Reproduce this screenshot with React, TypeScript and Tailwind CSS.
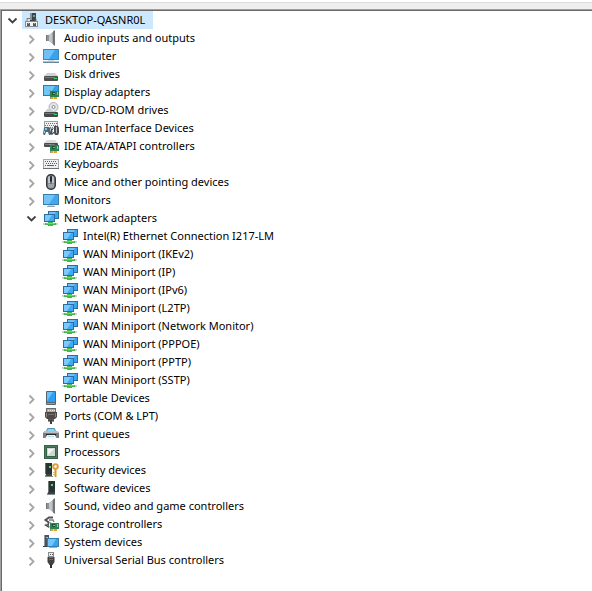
import { useState } from "react";
import type { ReactNode } from "react";
import clsx from "clsx";

interface DeviceNode {
  label: string;
  icon: ReactNode;
  expandable?: boolean;
  children?: DeviceNode[];
}

function Icon({ children }: { children: ReactNode }) {
  return (
    <svg viewBox="0 0 16 16" className="h-4 w-4 shrink-0" aria-hidden="true">
      {children}
    </svg>
  );
}

const computerRoot = (
  <Icon>
    <rect x="6" y="1" width="6" height="8" fill="#3c4248" />
    <rect x="6" y="1" width="2" height="7" fill="#8a9298" />
    <rect x="9" y="3" width="2" height="2" fill="#6fa08a" />
    <path d="M3 9V6.5h3M12 6.5v3" stroke="#777" fill="none" />
    <rect x="1.5" y="9.5" width="12" height="5" fill="#f4f4f4" stroke="#8b8b8b" />
    <rect x="3" y="11" width="3" height="3" fill="#5a5a5a" />
    <rect x="9" y="11" width="3" height="3" fill="#5a5a5a" />
    <rect x="4" y="11" width="1" height="1" fill="#d9a05a" />
    <rect x="10" y="11" width="1" height="1" fill="#d9a05a" />
  </Icon>
);

const speaker = (
  <Icon>
    <path d="M3 5h4v6H3z" fill="#8f9498" />
    <path d="M3 5h1v6H3z" fill="#6c7176" />
    <path d="M6 5l5-4v14l-5-4z" fill="#a4a8ac" />
    <path d="M6 5l3-2v10l-3-2z" fill="#c3c6c9" />
    <path d="M10 1.5L12 0v16l-2-1.5z" fill="#6f7479" />
  </Icon>
);

const computer = (
  <Icon>
    <rect x="0.5" y="1.5" width="15" height="10" fill="#37a3ef" stroke="#3a86b4" />
    <path d="M1 2h11L6 11H1z" fill="#6dc1f8" />
    <rect x="5" y="12" width="6" height="1" fill="#d0d8dc" />
    <rect x="0" y="13" width="16" height="1" fill="#b5c4cc" />
    <rect x="0" y="14" width="16" height="1" fill="#66889a" />
  </Icon>
);

const disk = (
  <Icon>
    <path d="M4 7h8l3 3H1z" fill="#cfd1d2" />
    <rect x="1" y="10" width="14" height="5" rx="1" fill="#4a4f50" />
    <rect x="2" y="11" width="10" height="1" fill="#777d7e" />
    <rect x="11" y="12" width="3" height="1" fill="#41d65d" />
  </Icon>
);

const card = (
  <g>
    <path d="M6 6.5h1.5V15" stroke="#8b9396" fill="none" />
    <rect x="7" y="7" width="9" height="6" fill="#2b8550" />
    <rect x="9" y="8" width="3" height="3" fill="#1b5539" />
    <rect x="10" y="9" width="2" height="1" fill="#6fb78a" />
    <rect x="14" y="8" width="1" height="3" fill="#8ed0a3" />
    <path d="M8 13h6v2H8z" fill="#e8a120" />
    <path d="M10.5 13v2" stroke="#f6d27c" />
  </g>
);

const display = (
  <Icon>
    <rect x="0.5" y="1.5" width="15" height="10" fill="#37a3e4" stroke="#2e7ba8" />
    <path d="M1 2h11L6 11H1z" fill="#6ec7f5" />
    {card}
  </Icon>
);

const disc = (
  <Icon>
    <circle cx="10.5" cy="5" r="4.5" fill="#e4e6e7" stroke="#a0a4a7" strokeWidth="0.8" />
    <circle cx="10.5" cy="5" r="1.5" fill="#fff" stroke="#898e91" />
    <path d="M4 7h3l2 2h3l3 2H1z" fill="#cbcdce" />
    <rect x="1" y="10" width="14" height="5" rx="1" fill="#454a4b" />
    <rect x="2" y="11" width="10" height="1" fill="#747a7b" />
    <rect x="11" y="12" width="3" height="1" fill="#41d65d" />
  </Icon>
);

const hid = (
  <Icon>
    <rect x="1.5" y="1.5" width="13" height="7" fill="#f0f1f2" stroke="#9ba0a3" />
    <path d="M3 3.5h11M3 7.5h11" stroke="#6e7478" strokeDasharray="1 1" />
    <path d="M2 5.5h12" stroke="#6e7478" strokeDasharray="1 1" />
    <path d="M0 14l1-6 1-1h4l1 1 1 6-1 1H6l-1-3H3l-1 3H1z" fill="#50697a" />
    <path d="M2 8h2v2H2zM1 11h1v2H1z" fill="#86c6ef" />
    <path d="M7 14l1-5h2v3h1V6h4l1 2v5l-1 2h-3l-1-2-2 2z" fill="#4a5054" />
    <path d="M13.5 7v6M9.5 10v3" stroke="#b4bbc0" />
  </Icon>
);

const ide = (
  <Icon>
    <path d="M4 2h8l3 3H1z" fill="#d9dbdc" />
    <rect x="1" y="5" width="14" height="4" rx="1" fill="#484c4c" />
    <rect x="2" y="6" width="10" height="1" fill="#777b7b" />
    {card}
  </Icon>
);

const keyboard = (
  <Icon>
    <rect x="0.5" y="3.5" width="15" height="9" fill="#eceef0" stroke="#a4a8ab" />
    <path d="M2 5.5h12M2 9.5h3M12 9.5h2" stroke="#5b6165" strokeDasharray="1 1" />
    <path d="M3 7.5h11" stroke="#5b6165" strokeDasharray="1 1" />
    <path d="M5 9.5h6" stroke="#5b6165" />
    <path d="M0 12.5h16" stroke="#6c7073" />
  </Icon>
);

const mouse = (
  <Icon>
    <rect x="3.7" y="0.7" width="8.6" height="14.6" rx="4" fill="#8a8f98" stroke="#34383e" strokeWidth="1.4" />
    <path d="M5 5c0-2 1-3 2-3v7H5zM9 2c1 0 2 1 2 3v4H9z" fill="#c0c5cc" />
    <path d="M5 10h6v1c0 4-6 4-6 0z" fill="#a0a5ad" />
    <rect x="7" y="2" width="2" height="6" rx="1" fill="#252a30" />
    <path d="M8 8v2" stroke="#50565e" />
  </Icon>
);

const monitor = (
  <Icon>
    <rect x="0.5" y="2.5" width="15" height="10" fill="#3fa8f1" stroke="#3a7fab" />
    <path d="M1 3h11L6 12H1z" fill="#72c3f9" />
    <rect x="5" y="13" width="6" height="1" fill="#c6d1d8" />
    <rect x="4" y="14" width="8" height="1" fill="#93a5b0" />
  </Icon>
);

const network = (
  <Icon>
    <rect x="5.5" y="1.5" width="10" height="7" fill="#3fa4ef" stroke="#2a6da0" />
    <path d="M6 2h7l-3 6H6z" fill="#6fc1f8" />
    <rect x="1.5" y="4.5" width="10" height="7" fill="#42aaf5" stroke="#2a6da0" />
    <path d="M2 5h7l-4 6H2z" fill="#7ccafc" />
    <rect x="0" y="13" width="15" height="2" fill="#cdd4d2" />
    <path d="M5 12h5v1h3v2h-3v1H5v-1H2v-2h3z" fill="#43b84b" />
    <rect x="3" y="13" width="9" height="1" fill="#74d673" />
  </Icon>
);

const portable = (
  <Icon>
    <rect x="3" y="1" width="10" height="14" rx="1" fill="#56646d" />
    <rect x="4" y="2" width="8" height="10" fill="#2f9ff2" />
    <path d="M4 2h6l-6 9z" fill="#6cc1fb" />
    <rect x="4" y="13" width="8" height="1" fill="#98a4ab" />
  </Icon>
);

const port = (
  <Icon>
    <rect x="3.5" y="0.5" width="9" height="4" fill="#a7a9aa" stroke="#6a6d6f" />
    <path d="M5 2.5h7" stroke="#ececec" strokeDasharray="1 1" />
    <path d="M2 4h12v5l-2 2H4L2 9z" fill="#4c4947" />
    <path d="M3.5 5v4M12.5 5v4" stroke="#8b8885" />
    <path d="M5 6h6v1H5z" fill="#75716d" />
    <path d="M5 11h6v2H5z" fill="#5d5955" />
    <path d="M6 12v2M10 12v2" stroke="#3e3b39" />
    <path d="M8 12v4" stroke="#3e3b39" strokeWidth="2" />
  </Icon>
);

const printer = (
  <Icon>
    <path d="M4.5 2.5h7l1 3h-9z" fill="#8fd3f3" stroke="#4f93b2" />
    <path d="M2 5h12l2 2v5H0V7z" fill="#777d81" />
    <path d="M2 5h12l2 2H0z" fill="#b9bec1" />
    <path d="M3 8h10v2H3z" fill="#22282c" />
    <path d="M4 9h8l2 4H2z" fill="#f4f7f9" />
    <path d="M5 10h6v1H5z" fill="#b7d9e7" />
  </Icon>
);

const processor = (
  <Icon>
    <rect x="1" y="1" width="14" height="14" fill="#4c7d5c" />
    <rect x="1.5" y="1.5" width="13" height="13" fill="none" stroke="#1f4830" strokeDasharray="1 1" />
    <rect x="3.5" y="3.5" width="9" height="9" fill="#cfd6d3" stroke="#2f6545" />
    <path d="M5 5h6l-6 6z" fill="#f4f6f5" />
  </Icon>
);

const security = (
  <Icon>
    <path d="M2 1h7v11H2z" fill="#2c3334" />
    <path d="M2 1h1v11H2z" fill="#6a7274" />
    <rect x="6" y="4" width="2" height="2" fill="#45e46b" />
    <path d="M3 12h6v3H2z" fill="#3e4546" />
    <path d="M2 14h8v1H2z" fill="#858c8d" />
    <circle cx="12.5" cy="4.5" r="2.3" fill="#fff" stroke="#e0a03a" strokeWidth="2" />
    <path d="M12.5 7v8" stroke="#dc952c" strokeWidth="2" />
    <path d="M10 10.5h2M10 12.5h2" stroke="#e8b45c" />
  </Icon>
);

const software = (
  <Icon>
    <path d="M5 1h7v11H5z" fill="#2c3334" />
    <path d="M5 1h1v11H5z" fill="#737b7d" />
    <rect x="8" y="4" width="2" height="2" fill="#45e46b" />
    <path d="M5 12h7v3H4z" fill="#3e4546" />
    <path d="M4 14h8v1H4z" fill="#858c8d" />
  </Icon>
);

const storage = (
  <Icon>
    <path d="M10 1.5H6L2.5 4l4 3" fill="none" stroke="#4e5555" strokeWidth="2" />
    <path d="M6 4h4l1 2" fill="none" stroke="#7c8484" strokeWidth="1.5" />
    <path d="M1 9l5-2v5z" fill="#454c4c" />
    <path d="M3 8l5 4" stroke="#858c8c" />
    {card}
  </Icon>
);

const system = (
  <Icon>
    <path d="M1 1h5v11H1z" fill="#4a565d" />
    <path d="M1 1h1v11H1z" fill="#8d979d" />
    <rect x="3" y="3" width="2" height="1" fill="#64d1ed" />
    <path d="M0 12h6v1H0z" fill="#333d43" />
    <rect x="4.5" y="4.5" width="11" height="8" fill="#37a3ee" stroke="#2f7fb2" />
    <path d="M5 5h8l-4 7H5z" fill="#72c4fa" />
    <path d="M6 13.5h8" stroke="#a2b0b8" />
  </Icon>
);

const usb = (
  <Icon>
    <rect x="5.5" y="0.5" width="5" height="4" fill="#ececec" stroke="#8b8b8b" />
    <path d="M7 2h1v1H7zM9 2h1v1H9z" fill="#555" />
    <path d="M4.500 5h7v5l-2 3h-3l-2-3z" fill="#424242" />
    <path d="M6 5.5h4M6 7.5h4" stroke="#6e6e6e" />
    <path d="M8 12v4" stroke="#303030" strokeWidth="2" />
  </Icon>
);

const adapters = [
  "Intel(R) Ethernet Connection I217-LM",
  "WAN Miniport (IKEv2)",
  "WAN Miniport (IP)",
  "WAN Miniport (IPv6)",
  "WAN Miniport (L2TP)",
  "WAN Miniport (Network Monitor)",
  "WAN Miniport (PPPOE)",
  "WAN Miniport (PPTP)",
  "WAN Miniport (SSTP)",
];

const root: DeviceNode = {
  label: "DESKTOP-QASNR0L",
  icon: computerRoot,
  children: [
    { label: "Audio inputs and outputs", icon: speaker, expandable: true },
    { label: "Computer", icon: computer, expandable: true },
    { label: "Disk drives", icon: disk, expandable: true },
    { label: "Display adapters", icon: display, expandable: true },
    { label: "DVD/CD-ROM drives", icon: disc, expandable: true },
    { label: "Human Interface Devices", icon: hid, expandable: true },
    { label: "IDE ATA/ATAPI controllers", icon: ide, expandable: true },
    { label: "Keyboards", icon: keyboard, expandable: true },
    { label: "Mice and other pointing devices", icon: mouse, expandable: true },
    { label: "Monitors", icon: monitor, expandable: true },
    {
      label: "Network adapters",
      icon: network,
      children: adapters.map(label => ({ label, icon: network })),
    },
    { label: "Portable Devices", icon: portable, expandable: true },
    { label: "Ports (COM & LPT)", icon: port, expandable: true },
    { label: "Print queues", icon: printer, expandable: true },
    { label: "Processors", icon: processor, expandable: true },
    { label: "Security devices", icon: security, expandable: true },
    { label: "Software devices", icon: software, expandable: true },
    { label: "Sound, video and game controllers", icon: speaker, expandable: true },
    { label: "Storage controllers", icon: storage, expandable: true },
    { label: "System devices", icon: system, expandable: true },
    { label: "Universal Serial Bus controllers", icon: usb, expandable: true },
  ],
};

interface TreeItemProps {
  node: DeviceNode;
  selected: string;
  onSelect: (label: string) => void;
}

function TreeItem({ node, selected, onSelect }: TreeItemProps) {
  const [open, setOpen] = useState(Boolean(node.children));
  const canToggle = Boolean(node.children) || node.expandable;
  const isSelected = selected === node.label;

  return (
    <li role="treeitem" aria-expanded={canToggle ? open : undefined} aria-selected={isSelected}>
      <div className="flex h-[18px] items-center gap-0.5">
        {canToggle ? (
          <button type="button" aria-label={`Toggle ${node.label}`} onClick={() => setOpen(!open)} className="h-4 w-4 shrink-0">
            <svg viewBox="0 0 16 16" className="h-4 w-4" fill="none" strokeWidth="1.8" aria-hidden="true">
              {open ? <path d="M4.5 6.5l4 4 4-4" stroke="#404040" /> : <path d="M6.5 5.5l4 4-4 4" stroke="#a6a6a6" />}
            </svg>
          </button>
        ) : (
          <span className="w-4 shrink-0" />
        )}
        <button
          type="button"
          onClick={() => onSelect(node.label)}
          className={clsx("flex h-full items-center gap-[5px] pr-2 pl-0.5 whitespace-nowrap", isSelected && "bg-[#cce8ff]")}
        >
          {node.icon}
          <span>{node.label}</span>
        </button>
      </div>
      {open && node.children && (
        <ul role="group" className="pl-[19px]">
          {node.children.map(child => (
            <TreeItem key={child.label} node={child} selected={selected} onSelect={onSelect} />
          ))}
        </ul>
      )}
    </li>
  );
}

export default function App() {
  const [selected, setSelected] = useState("DESKTOP-QASNR0L");

  return (
    <div className="flex min-h-screen flex-col bg-white pt-0.5 font-['Noto_Sans',sans-serif] text-[11px] leading-[18px] text-black">
      {/* Toolbar edge */}
      <div className="h-[7px] border-t border-[#dcdcdc] bg-[#efefef]" />

      <main className="flex flex-1 flex-col border-t border-l border-[#a0a0a0]">
        <div className="flex-1 border-t border-l border-[#696969] pl-0.5">
          <ul role="tree" aria-label="Devices">
            <TreeItem node={root} selected={selected} onSelect={setSelected} />
          </ul>
        </div>
      </main>
    </div>
  );
}
